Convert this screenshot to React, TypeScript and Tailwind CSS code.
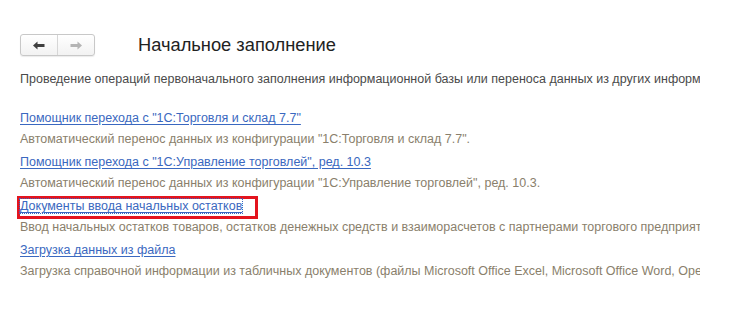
import React from "react";

const items = [
  {
    link: 'Помощник перехода с "1С:Торговля и склад 7.7"',
    desc: 'Автоматический перенос данных из конфигурации "1С:Торговля и склад 7.7".',
  },
  {
    link: 'Помощник перехода с "1С:Управление торговлей", ред. 10.3',
    desc: 'Автоматический перенос данных из конфигурации "1С:Управление торговлей", ред. 10.3.',
  },
  {
    link: "Документы ввода начальных остатков",
    desc: "Ввод начальных остатков товаров, остатков денежных средств и взаиморасчетов с партнерами торгового предприятия.",
    focused: true,
  },
  {
    link: "Загрузка данных из файла",
    desc: "Загрузка справочной информации из табличных документов (файлы Microsoft Office Excel, Microsoft Office Word, OpenOffice Calc).",
  },
];

export default function App() {
  return (
    <div
      className="w-[729px] h-[316px] bg-white overflow-hidden"
      style={{ fontFamily: '"Liberation Sans", Arial, sans-serif' }}
    >
      <div className="flex items-center pl-[20px] pt-[34px]">
        <div className="flex h-[22px] w-[75px] rounded-[3px] border border-[#c8c8c8] bg-gradient-to-b from-white to-[#f2f2f2] shadow-[0_1px_1px_rgba(0,0,0,0.08)]">
          <div className="flex w-[37px] items-center justify-center border-r border-[#d6d6d6]">
            <svg width="12" height="9" viewBox="0 0 12 9">
              <path d="M0 4.5 L4.5 0.5 L4.5 3 L11.5 3 L11.5 6 L4.5 6 L4.5 8.5 Z" fill="#3f3f3f" />
            </svg>
          </div>
          <div className="flex flex-1 items-center justify-center">
            <svg width="12" height="9" viewBox="0 0 12 9">
              <path d="M12 4.5 L7.5 0.5 L7.5 3 L0.5 3 L0.5 6 L7.5 6 L7.5 8.5 Z" fill="#b4b4b4" />
            </svg>
          </div>
        </div>
        <div className="ml-[43px] text-[18.3px] leading-[22px] text-[#222]">Начальное заполнение</div>
      </div>
      <div className="w-[700px] overflow-hidden">
        <div className="mt-[15px] pl-[20px] whitespace-nowrap text-[12.5px] leading-[16px] text-[#4a4a4a]">
          Проведение операций первоначального заполнения информационной базы или переноса данных из других информационных баз.
        </div>
        <div className="mt-[23px] flex flex-col pl-[20px]">
          {items.map((it, i) => (
            <div key={i} className={i === 0 ? "" : "mt-[7px]"}>
              <div className="relative whitespace-nowrap text-[12.5px] leading-[16px]">
                {it.focused && (
                  <span className="absolute left-[-3px] top-[-2px] h-[23px] w-[241px] border-[3px] border-[#e3141e]" />
                )}
                <span
                  className={
                    it.focused
                      ? "relative text-[#3a68c0] underline underline-offset-[2px] outline outline-1 outline-dotted outline-[#3a68c0]"
                      : "text-[#3a68c0] underline underline-offset-[2px]"
                  }
                >
                  {it.link}
                </span>
              </div>
              <div className="mt-[5px] whitespace-nowrap text-[12.5px] leading-[16px] text-[#8a7f6c]">{it.desc}</div>
            </div>
          ))}
        </div>
      </div>
    </div>
  );
}
